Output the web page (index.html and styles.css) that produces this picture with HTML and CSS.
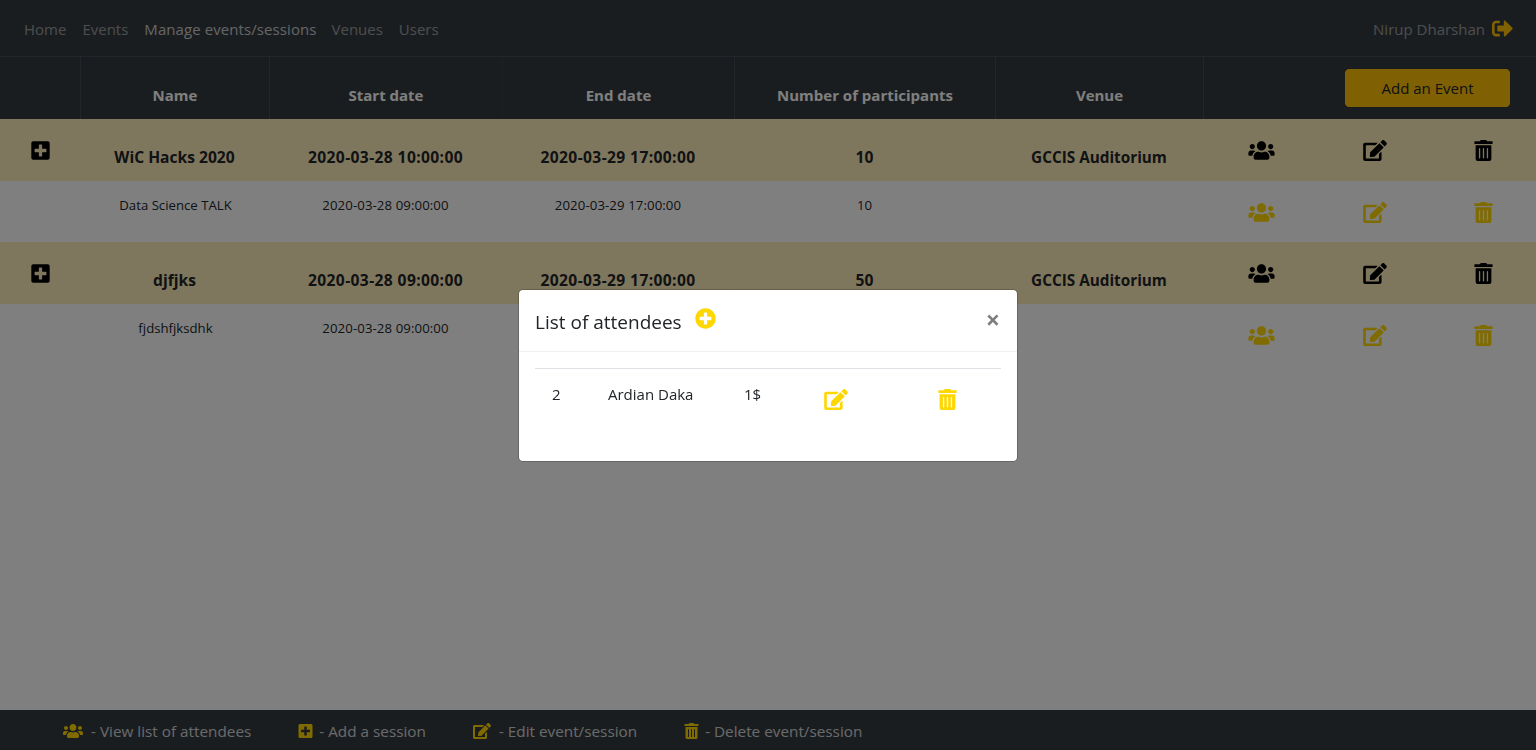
FILE: index.html
```html
<!DOCTYPE html>
<html lang="en">
<head>
<meta charset="UTF-8">
<meta name="viewport" content="width=device-width, initial-scale=1.0">
<title>Manage events/sessions</title>
<link rel="stylesheet" href="styles.css">
</head>
<body>
    <svg class="icon-defs" aria-hidden="true">
        <symbol id="i-users" viewBox="0 0 640 512"><path d="M96 224c35.3 0 64-28.7 64-64s-28.7-64-64-64-64 28.7-64 64 28.7 64 64 64zm448 0c35.3 0 64-28.7 64-64s-28.7-64-64-64-64 28.7-64 64 28.7 64 64 64zm32 32h-64c-17.6 0-33.5 7.1-45.1 18.6 40.3 22.1 68.9 62 75.1 109.4h66c17.7 0 32-14.3 32-32v-32c0-35.3-28.7-64-64-64zm-256 0c61.9 0 112-50.1 112-112S381.9 32 320 32 208 82.1 208 144s50.1 112 112 112zm76.8 32h-8.3c-20.8 10-43.9 16-68.5 16s-47.6-6-68.5-16h-8.3C179.6 288 128 339.6 128 403.2V432c0 26.5 21.5 48 48 48h288c26.5 0 48-21.5 48-48v-28.8c0-63.6-51.6-115.2-115.2-115.2zm-223.7-13.4C161.5 263.1 145.6 256 128 256H64c-35.3 0-64 28.7-64 64v32c0 17.7 14.3 32 32 32h65.9c6.3-47.4 34.9-87.3 75.2-109.4z"/></symbol>
        <symbol id="i-edit" viewBox="0 0 576 512"><path d="M402.6 83.2l90.2 90.2c3.8 3.8 3.8 10 0 13.8L274.4 405.6l-92.8 10.3c-12.4 1.4-22.9-9.1-21.5-21.5l10.3-92.8L388.8 83.2c3.8-3.8 10-3.8 13.8 0zm162-22.9l-48.8-48.8c-15.2-15.2-39.9-15.2-55.2 0l-35.4 35.4c-3.8 3.8-3.8 10 0 13.8l90.2 90.2c3.8 3.8 10 3.8 13.8 0l35.4-35.4c15.2-15.3 15.2-40 0-55.2zM384 346.2V448H64V128h229.8c3.2 0 6.2-1.3 8.5-3.5l40-40c7.6-7.6 2.2-20.5-8.5-20.5H48C21.5 64 0 85.5 0 112v352c0 26.5 21.5 48 48 48h352c26.5 0 48-21.5 48-48V306.2c0-10.7-12.9-16-20.5-8.5l-40 40c-2.2 2.3-3.5 5.3-3.5 8.5z"/></symbol>
        <symbol id="i-trash" viewBox="0 0 448 512"><path d="M32 464a48 48 0 0 0 48 48h288a48 48 0 0 0 48-48V128H32zm272-256a16 16 0 0 1 32 0v224a16 16 0 0 1-32 0zm-96 0a16 16 0 0 1 32 0v224a16 16 0 0 1-32 0zm-96 0a16 16 0 0 1 32 0v224a16 16 0 0 1-32 0zM432 32H312l-9.4-18.7A24 24 0 0 0 281.1 0H166.8a23.72 23.72 0 0 0-21.4 13.3L136 32H16A16 16 0 0 0 0 48v32a16 16 0 0 0 16 16h416a16 16 0 0 0 16-16V48a16 16 0 0 0-16-16z"/></symbol>
        <symbol id="i-plus-square" viewBox="0 0 448 512"><path d="M400 32H48C21.5 32 0 53.5 0 80v352c0 26.5 21.5 48 48 48h352c26.5 0 48-21.5 48-48V80c0-26.5-21.5-48-48-48zm-32 252c0 6.6-5.4 12-12 12h-92v92c0 6.6-5.4 12-12 12h-56c-6.6 0-12-5.4-12-12v-92H92c-6.6 0-12-5.4-12-12v-56c0-6.6 5.4-12 12-12h92v-92c0-6.6 5.4-12 12-12h56c6.6 0 12 5.4 12 12v92h92c6.6 0 12 5.4 12 12v56z"/></symbol>
        <symbol id="i-plus-circle" viewBox="0 0 512 512"><path d="M256 8C119 8 8 119 8 256s111 248 248 248 248-111 248-248S393 8 256 8zm144 276c0 6.6-5.4 12-12 12h-92v92c0 6.6-5.4 12-12 12h-56c-6.6 0-12-5.4-12-12v-92h-92c-6.6 0-12-5.4-12-12v-56c0-6.6 5.4-12 12-12h92v-92c0-6.6 5.4-12 12-12h56c6.6 0 12 5.4 12 12v92h92c6.6 0 12 5.4 12 12v56z"/></symbol>
        <symbol id="i-sign-out" viewBox="0 0 512 512"><path d="M497 273L329 441c-15 15-41 4.5-41-17v-96H152c-13.3 0-24-10.7-24-24v-96c0-13.3 10.7-24 24-24h136V88c0-21.4 25.9-32 41-17l168 168c9.3 9.4 9.3 24.6 0 34zM192 436v-40c0-6.6-5.4-12-12-12H96c-17.7 0-32-14.3-32-32V160c0-17.7 14.3-32 32-32h84c6.6 0 12-5.4 12-12V76c0-6.6-5.4-12-12-12H96c-53 0-96 43-96 96v192c0 53 43 96 96 96h84c6.6 0 12-5.4 12-12z"/></symbol>
    </svg>

    <nav class="navbar">
        <a class="nav-link" href="#">Home</a>
        <a class="nav-link" href="#">Events</a>
        <a class="nav-link active" href="#">Manage events/sessions</a>
        <a class="nav-link" href="#">Venues</a>
        <a class="nav-link" href="#">Users</a>
        <div class="nav-user">
            <span>Nirup Dharshan</span>
            <svg class="icon icon-logout"><use href="#i-sign-out"/></svg>
        </div>
    </nav>

    <main class="content">
        <table class="events">
            <colgroup>
                <col class="c-toggle">
                <col class="c-name">
                <col class="c-start">
                <col class="c-end">
                <col class="c-count">
                <col class="c-venue">
                <col class="c-users">
                <col class="c-edit">
                <col class="c-delete">
            </colgroup>
            <thead>
                <tr>
                    <th></th>
                    <th>Name</th>
                    <th>Start date</th>
                    <th class="faint">End date</th>
                    <th>Number of participants</th>
                    <th>Venue</th>
                    <th></th>
                    <th colspan="2" class="add-cell"><button class="btn-add" type="button">Add an Event</button></th>
                </tr>
            </thead>
            <tbody>
                <tr class="event-row">
                    <td class="icon-cell"><svg class="icon icon-square"><use href="#i-plus-square"/></svg></td>
                    <td>WiC Hacks 2020</td>
                    <td class="date">2020-03-28 10:00:00</td>
                    <td class="date">2020-03-29 17:00:00</td>
                    <td>10</td>
                    <td class="venue">GCCIS Auditorium</td>
                    <td class="icon-cell"><svg class="icon icon-users"><use href="#i-users"/></svg></td>
                    <td class="icon-cell"><svg class="icon icon-edit"><use href="#i-edit"/></svg></td>
                    <td class="icon-cell"><svg class="icon icon-trash"><use href="#i-trash"/></svg></td>
                </tr>
                <tr class="session-row">
                    <td></td>
                    <td class="session-name">Data Science TALK</td>
                    <td class="date">2020-03-28 09:00:00</td>
                    <td class="date">2020-03-29 17:00:00</td>
                    <td>10</td>
                    <td></td>
                    <td class="icon-cell"><svg class="icon icon-users"><use href="#i-users"/></svg></td>
                    <td class="icon-cell"><svg class="icon icon-edit"><use href="#i-edit"/></svg></td>
                    <td class="icon-cell"><svg class="icon icon-trash"><use href="#i-trash"/></svg></td>
                </tr>
                <tr class="event-row">
                    <td class="icon-cell"><svg class="icon icon-square"><use href="#i-plus-square"/></svg></td>
                    <td>djfjks</td>
                    <td class="date">2020-03-28 09:00:00</td>
                    <td class="date">2020-03-29 17:00:00</td>
                    <td>50</td>
                    <td class="venue">GCCIS Auditorium</td>
                    <td class="icon-cell"><svg class="icon icon-users"><use href="#i-users"/></svg></td>
                    <td class="icon-cell"><svg class="icon icon-edit"><use href="#i-edit"/></svg></td>
                    <td class="icon-cell"><svg class="icon icon-trash"><use href="#i-trash"/></svg></td>
                </tr>
                <tr class="session-row">
                    <td></td>
                    <td class="session-name">fjdshfjksdhk</td>
                    <td class="date">2020-03-28 09:00:00</td>
                    <td class="date">2020-03-29 17:00:00</td>
                    <td>50</td>
                    <td></td>
                    <td class="icon-cell"><svg class="icon icon-users"><use href="#i-users"/></svg></td>
                    <td class="icon-cell"><svg class="icon icon-edit"><use href="#i-edit"/></svg></td>
                    <td class="icon-cell"><svg class="icon icon-trash"><use href="#i-trash"/></svg></td>
                </tr>
            </tbody>
        </table>
    </main>

    <footer class="legend">
        <span class="legend-item"><svg class="icon legend-users"><use href="#i-users"/></svg> - View list of attendees</span>
        <span class="legend-item"><svg class="icon legend-square"><use href="#i-plus-square"/></svg> - Add a session</span>
        <span class="legend-item"><svg class="icon legend-edit"><use href="#i-edit"/></svg> - Edit event/session</span>
        <span class="legend-item"><svg class="icon legend-trash"><use href="#i-trash"/></svg> - Delete event/session</span>
    </footer>

    <div class="backdrop"></div>
    <div class="modal-wrap">
        <div class="modal">
            <div class="modal-header">
                <h5 class="modal-title">List of attendees</h5>
                <svg class="icon icon-circle"><use href="#i-plus-circle"/></svg>
                <button class="close" type="button">&times;</button>
            </div>
            <div class="modal-body">
                <div class="attendee">
                    <span class="att-id">2</span>
                    <span class="att-name">Ardian Daka</span>
                    <span class="att-paid">1$</span>
                    <svg class="icon icon-edit"><use href="#i-edit"/></svg>
                    <svg class="icon icon-trash att-trash"><use href="#i-trash"/></svg>
                </div>
            </div>
        </div>
    </div>
</body>
</html>
```

FILE: styles.css
```css
html, body {
    height: 100%;
}
body {
    margin: 0;
    display: flex;
    flex-direction: column;
    min-height: 100vh;
    overflow: hidden;
    background-color: #fff;
    color: #212529;
    font-family: "Open Sans", "Liberation Sans", sans-serif;
    font-size: 15px;
    line-height: 24px;
}
.icon-defs {
    display: none;
}
.icon {
    display: block;
    height: 21px;
    fill: currentColor;
}
.icon-users { width: 27px; }
.icon-edit { width: 24px; }
.icon-trash, .icon-square { width: 19px; }

/* top bar */
.navbar {
    display: flex;
    align-items: center;
    height: 56px;
    padding: 0 23px 0 24px;
    background-color: #343a40;
    border-bottom: 1px solid #454d55;
}
.nav-link {
    margin-right: 16px;
    padding-top: 2px;
    color: rgba(255, 255, 255, .5);
    text-decoration: none;
}
.nav-link.active {
    margin-right: 15px;
    letter-spacing: .08px;
    color: rgba(255, 255, 255, .75);
}
.nav-user {
    display: flex;
    align-items: center;
    gap: 7px;
    margin-left: auto;
    color: rgba(255, 255, 255, .5);
}
.nav-user span {
    padding-top: 2px;
}
.icon-logout {
    width: 21px;
    color: #ffc107;
}

/* events table */
.content {
    flex: 1;
}
.events {
    width: 100%;
    border-collapse: collapse;
    table-layout: fixed;
    text-align: center;
}
.c-toggle { width: 80px; }
.c-name { width: 189px; }
.c-start { width: 233px; }
.c-end { width: 232px; }
.c-count { width: 261px; }
.c-venue { width: 208px; }
.c-users { width: 114px; }
.c-edit { width: 116px; }
.events th {
    height: 62px;
    padding: 26px 12px 0 13px;
    box-sizing: border-box;
    background-color: #343a40;
    border-left: 1px solid #454d55;
    color: #fff;
    font-weight: 700;
    vertical-align: top;
}
.events th.faint {
    border-left-color: #394047;
}
.events th:first-child, .events td:first-child {
    border-left: none;
}
.events .add-cell {
    padding: 12px 26px 0 0;
    text-align: right;
    border-left: none;
}
.btn-add {
    width: 165px;
    height: 38px;
    background-color: #ffc107;
    border: 1px solid #ffc107;
    border-radius: 4px;
    color: #212529;
    font: inherit;
    font-weight: 400;
    cursor: pointer;
}
.event-row td {
    height: 62px;
    padding: 26px 12px 0;
    box-sizing: border-box;
    background-color: #ffeeba;
    border-left: 1px solid #fff0c2;
    font-size: 15.6px;
    font-weight: 700;
    vertical-align: top;
}
.event-row td:first-child {
    padding-left: 14px;
}
.event-row .date {
    letter-spacing: .38px;
}
.event-row .venue {
    font-size: 15.3px;
}
.session-row td {
    height: 61px;
    padding: 12px;
    box-sizing: border-box;
    font-size: 13.2px;
    vertical-align: top;
}
.session-row .session-name {
    padding-left: 14px;
}
.session-row .date {
    letter-spacing: .1px;
}
.icon-cell .icon {
    margin: 0 auto;
}
.event-row .icon-cell {
    padding-top: 21px;
    color: #000;
}
.session-row .icon-cell {
    padding-top: 21px;
    color: #ffd700;
}
.event-row .icon-users, .session-row .icon-users {
    transform: translateX(1px);
}
.event-row .icon-trash, .session-row .icon-trash {
    transform: translateX(-1px);
}

/* bottom legend */
.legend {
    display: flex;
    align-items: center;
    gap: 47px;
    height: 40px;
    box-sizing: border-box;
    padding: 2px 0 0 63px;
    background-color: #343a40;
    color: rgba(255, 255, 255, .8);
    font-size: 15.3px;
}
.legend-item {
    display: flex;
    align-items: center;
    gap: 8px;
}
.legend .icon {
    height: 16px;
    color: #ffd700;
}
.legend-users { width: 20px; }
.legend-square, .legend-trash {
    width: 15px;
    margin-right: -2px;
}
.legend-edit { width: 18px; }

/* attendees dialog */
.backdrop {
    position: fixed;
    inset: 0;
    background-color: rgba(0, 0, 0, .5);
}
.modal-wrap {
    position: fixed;
    inset: 0;
    display: flex;
    justify-content: center;
    align-items: flex-start;
    padding-top: 289px;
}
.modal {
    width: 498px;
    height: 171px;
    background-color: #fff;
    background-clip: padding-box;
    border: 1px solid rgba(0, 0, 0, .2);
    border-radius: 5px;
}
.modal-header {
    display: flex;
    align-items: flex-start;
    height: 62px;
    padding: 16px;
    box-sizing: border-box;
    border-bottom: 1px solid #f0f1f3;
}
.modal-title {
    margin: 1px 0 0;
    font-size: 19px;
    font-weight: 400;
    line-height: 30px;
}
.icon-circle {
    width: 21px;
    margin: 2px 0 0 13px;
    color: #ffd700;
}
.close {
    margin-left: auto;
    padding: 0 1px 0 0;
    background: none;
    border: none;
    color: #000;
    opacity: .5;
    font: 700 25px/26px "Open Sans", sans-serif;
}
.modal-body {
    padding: 16px;
}
.attendee {
    display: flex;
    align-items: flex-start;
    padding-top: 13px;
    border-top: 1px solid #dee2e6;
}
.att-id { margin-left: 17px; width: 56px; }
.att-name { width: 136px; }
.att-paid { width: 80px; }
.attendee .icon {
    margin-top: 7px;
    color: #ffd700;
}
.att-trash { margin-left: 90px; }
```
